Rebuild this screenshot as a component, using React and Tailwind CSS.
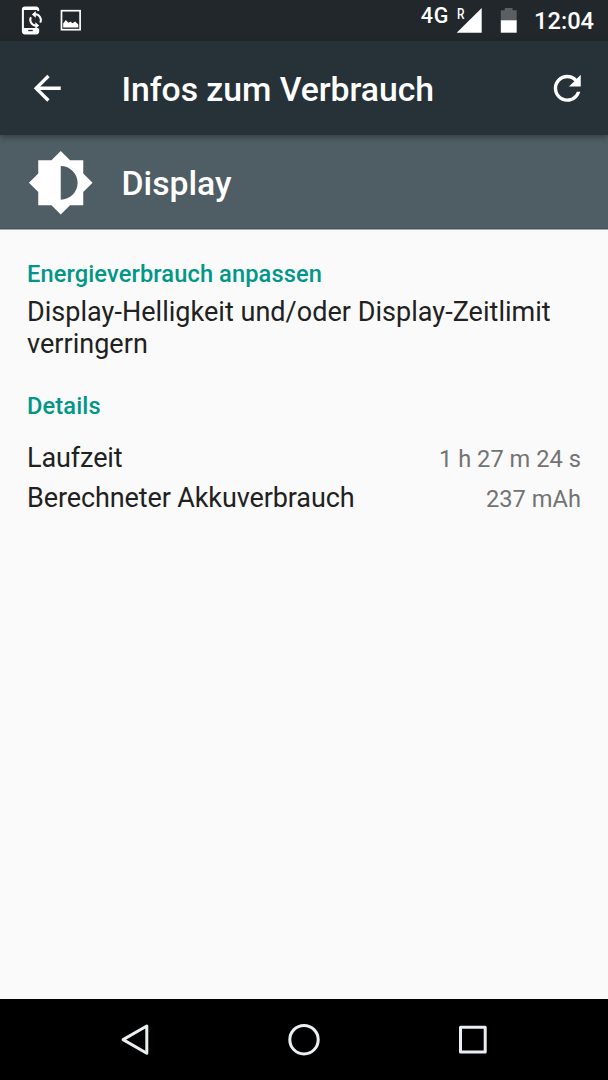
import React from "react";

const details = [
  { label: "Laufzeit", value: "1 h 27 m 24 s" },
  { label: "Berechneter Akkuverbrauch", value: "237 mAh" },
];

const StatusBar = () => (
  <div className="flex h-[41px] shrink-0 items-start justify-between bg-[#21272b] text-white">
    <div className="flex">
      {/* Phone with sync arrows */}
      <svg className="ml-[20px] h-[41px] w-[25px]" viewBox="20 0 25 41" fill="none">
        <path
          d="M38.2 11V9.6a2.1 2.1 0 0 0-2.1-2.1H25a2.1 2.1 0 0 0-2.1 2.1v21.7a2.1 2.1 0 0 0 2.1 2.1h11.1a2.1 2.1 0 0 0 2.1-2.1V28.5"
          stroke="#fff"
          strokeWidth="2"
        />
        <path d="M23.5 7h14v3h-14zM23.5 28h14.5v5.5H23.5z" fill="#fff" />
        <path d="M28.2 30.5h4.6" stroke="#21272b" strokeWidth="1.3" />
        <path
          d="M35 14.3a5.7 5.7 0 0 1 5.2 8.3M36.2 25.5a5.7 5.7 0 0 1-5.3-8.3"
          stroke="#fff"
          strokeWidth="2"
        />
        <path d="M35.8 11v6.8l-3.9-3.4zM35.3 22.2V29l3.9-3.4z" fill="#fff" />
      </svg>
      {/* Picture */}
      <svg className="ml-[14px] h-[41px] w-[24px]" viewBox="59 0 24 41" fill="none">
        <rect x="61.5" y="10.7" width="18.6" height="19" stroke="#fff" strokeWidth="1.7" />
        <path d="M63.2 27.4v-4l2.6-3.5 2.5 2.9 2.2-1.2 2 1.7 2.6-1.7 3.2 3v2.8z" fill="#fff" />
      </svg>
    </div>

    <div className="flex pr-[14px]">
      <span className="mt-[6px] text-[21.5px] font-medium leading-[20px] tracking-[0.8px]">4G</span>
      <div className="relative ml-[7px] h-[41px] w-[26px]">
        <span className="absolute left-[1px] top-[8px] origin-left scale-x-[0.82] text-[14.5px] font-medium leading-[14px]">
          R
        </span>
        <svg className="h-[41px] w-[26px]" viewBox="0 0 26 41">
          <path d="M0.7 32.8H25.7V8z" fill="#fff" />
        </svg>
      </div>
      <svg className="ml-[18px] h-[41px] w-[17px]" viewBox="0 0 17 41">
        <path d="M0.8 10.2h4V8h7.7v2.2h4.2V21H0.8z" fill="#5b5f61" />
        <path d="M0.8 20.3h15.9v12.4H0.8z" fill="#fff" />
      </svg>
      <span className="ml-[17px] mt-[7px] text-[23.625px] font-medium leading-[28px]">12:04</span>
    </div>
  </div>
);

const Toolbar = () => (
  <div className="z-10 flex h-[94px] shrink-0 items-center bg-[#263238] pl-[27px] pr-[21px] text-white shadow-[0_2px_6px_rgba(0,0,0,0.35)]">
    <svg className="h-[40.5px] w-[40.5px]" viewBox="0 0 24 24" fill="currentColor">
      <path d="M20 11H7.83l5.59-5.59L12 4l-8 8 8 8 1.41-1.41L7.83 13H20v-2z" />
    </svg>
    <h1 className="ml-[54px] flex-1 pt-[3px] text-[33.75px] font-medium leading-[41px] tracking-[-0.05px]">
      Infos zum Verbrauch
    </h1>
    <svg className="h-[40.5px] w-[40.5px]" viewBox="0 0 24 24" fill="currentColor">
      <path d="M17.65 6.35C16.2 4.9 14.21 4 12 4c-4.42 0-7.99 3.58-7.99 8s3.57 8 7.99 8c3.73 0 6.84-2.55 7.73-6h-2.08c-.82 2.33-3.04 4-5.65 4-3.31 0-6-2.69-6-6s2.69-6 6-6c1.66 0 3.14.69 4.22 1.78L13 11h7V4l-2.35 2.35z" />
    </svg>
  </div>
);

const AppHeader = () => (
  <div className="flex h-[95px] shrink-0 items-center border-b border-[#a3abaf] bg-[#4f5d64] pl-[27px] text-white shadow-[inset_0_-1px_0_#44535b]">
    <svg className="mt-[1px] h-[67.5px] w-[67.5px]" viewBox="0 0 24 24" fill="currentColor">
      <path d="M20 15.31L23.31 12 20 8.69V4h-4.69L12 .69 8.69 4H4v4.69L.69 12 4 15.31V20h4.69L12 23.31 15.31 20H20v-4.69zM12 18V6c3.31 0 6 2.69 6 6s-2.69 6-6 6z" />
    </svg>
    <h2 className="ml-[27px] pt-[3px] text-[33.75px] font-medium leading-[41px]">Display</h2>
  </div>
);

const NavBar = () => (
  <div className="flex h-[81px] shrink-0 items-center justify-center gap-[129px] bg-black">
    <svg className="h-[40px] w-[40px]" viewBox="0 0 40 40" fill="none" stroke="#eceff1" strokeWidth="3" strokeLinejoin="round">
      <path d="M31.8 6v27.2L8.1 19.6z" />
    </svg>
    <svg className="h-[40px] w-[40px]" viewBox="0 0 40 40" fill="none" stroke="#eceff1" strokeWidth="3">
      <circle cx="20" cy="19.7" r="14.2" />
    </svg>
    <svg className="h-[40px] w-[40px]" viewBox="0 0 40 40" fill="none" stroke="#eceff1" strokeWidth="3" strokeLinejoin="round">
      <rect x="7.5" y="7.3" width="24.7" height="24.7" />
    </svg>
  </div>
);

const App = () => {
  return (
    <div className="flex h-[1080px] w-[608px] flex-col overflow-hidden bg-[#fafafa] font-['Roboto',sans-serif]">
      <StatusBar />
      <Toolbar />
      <AppHeader />

      <main className="flex-1 px-[27px] pt-[30px] text-[27px] text-[#212121]">
        <h3 className="text-[23.625px] font-medium leading-[28px] tracking-[0.12px] text-[#009688]">
          Energieverbrauch anpassen
        </h3>
        <p className="mt-[8px] leading-[32px] tracking-[0.03px]">
          Display-Helligkeit und/oder Display-Zeitlimit verringern
        </p>

        <h3 className="mt-[32px] text-[23.625px] font-medium leading-[28px] tracking-[0.12px] text-[#009688]">
          Details
        </h3>
        <div className="mt-[18px]">
          {details.map((item) => (
            <div key={item.label} className="flex h-[40px] items-baseline justify-between leading-[40px]">
              <span className="tracking-[-0.11px]">{item.label}</span>
              <span className="text-[23.625px] tracking-[0.04px] text-[#737373]">{item.value}</span>
            </div>
          ))}
        </div>
      </main>

      <NavBar />
    </div>
  );
};

export default App;
